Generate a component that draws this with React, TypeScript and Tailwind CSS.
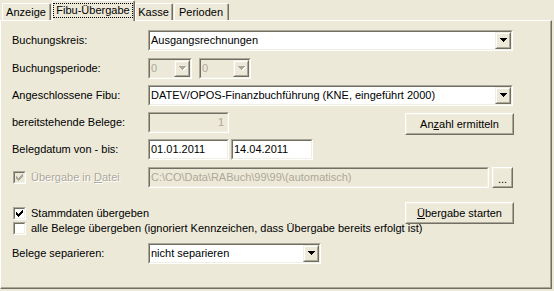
import React from "react";

const sunkenOuter = "border border-t-[#ACA899] border-l-[#ACA899] border-r-white border-b-white";
const sunkenInner = "border border-t-[#716F64] border-l-[#716F64] border-r-[#F1EFE2] border-b-[#F1EFE2]";
const grayText = "text-[#ACA899]";

function Arrow({ disabled }: { disabled?: boolean }) {
  const rows = [
    [0, 7],
    [1, 5],
    [2, 3],
    [3, 1],
  ];
  return (
    <svg width="8" height="5" shapeRendering="crispEdges">
      {disabled &&
        rows.map(([x, w], i) => <rect key={"s" + i} x={x + 1} y={i + 1} width={w} height={1} fill="#fff" />)}
      {rows.map(([x, w], i) => (
        <rect key={i} x={x} y={i} width={w} height={1} fill={disabled ? "#ACA899" : "#000"} />
      ))}
    </svg>
  );
}

function CheckMark({ color }: { color: string }) {
  const rects = [
    [6, 0, 1],
    [5, 1, 2],
    [0, 2, 1],
    [4, 2, 3],
    [0, 3, 2],
    [3, 3, 3],
    [0, 4, 5],
    [1, 5, 3],
    [2, 6, 1],
  ];
  return (
    <svg width="7" height="7" shapeRendering="crispEdges">
      {rects.map(([x, y, w], i) => (
        <rect key={i} x={x} y={y} width={w} height={1} fill={color} />
      ))}
    </svg>
  );
}

function CheckBox({ checked, disabled }: { checked?: boolean; disabled?: boolean }) {
  return (
    <div className={`w-[13px] h-[13px] shrink-0 ${sunkenOuter}`}>
      <div
        className={`w-full h-full flex items-center justify-center ${sunkenInner} ${
          disabled ? "bg-[#ECE9D8]" : "bg-white"
        }`}
      >
        {checked && <CheckMark color={disabled ? "#ACA899" : "#000"} />}
      </div>
    </div>
  );
}

function DropButton({ disabled }: { disabled?: boolean }) {
  return (
    <div className="w-[16px] h-full shrink-0 border border-t-[#F1EFE2] border-l-[#F1EFE2] border-r-[#716F64] border-b-[#716F64] bg-[#ECE9D8]">
      <div className="w-full h-full flex items-center justify-center pl-[1px] border border-t-white border-l-white border-r-[#ACA899] border-b-[#ACA899]">
        <Arrow disabled={disabled} />
      </div>
    </div>
  );
}

function Combo({ value, width, disabled }: { value: string; width: string; disabled?: boolean }) {
  return (
    <div className={`h-[21px] shrink-0 ${width} ${sunkenOuter}`}>
      <div className={`h-full flex ${sunkenInner} ${disabled ? "bg-[#ECE9D8]" : "bg-white"}`}>
        <span className={`flex-1 pl-[1px] leading-[17px] whitespace-nowrap overflow-hidden ${disabled ? grayText : ""}`}>
          {value}
        </span>
        <DropButton disabled={disabled} />
      </div>
    </div>
  );
}

function Edit({
  value,
  width,
  disabled,
  right,
}: {
  value: string;
  width: string;
  disabled?: boolean;
  right?: boolean;
}) {
  return (
    <div className={`h-[21px] shrink-0 ${width} ${sunkenOuter}`}>
      <div
        className={`h-full px-[1px] leading-[17px] whitespace-nowrap overflow-hidden ${sunkenInner} ${
          disabled ? `bg-[#ECE9D8] ${grayText}` : "bg-white"
        } ${right ? "text-right pr-[3px]" : ""}`}
      >
        {value}
      </div>
    </div>
  );
}

function Button({ children, className }: { children: React.ReactNode; className: string }) {
  return (
    <div
      className={`shrink-0 bg-[#ECE9D8] border border-t-white border-l-white border-r-[#716F64] border-b-[#716F64] ${className}`}
    >
      <div className="h-full flex items-center justify-center border border-t-[#F1EFE2] border-l-[#F1EFE2] border-r-[#ACA899] border-b-[#ACA899]">
        {children}
      </div>
    </div>
  );
}

function Tab({ label, width, selected }: { label: string; width: string; selected?: boolean }) {
  if (selected) {
    return (
      <div
        className={`relative z-10 h-[21px] bg-[#ECE9D8] rounded-t-[2px] border-t border-l border-r border-t-white border-l-white border-r-[#716F64] ${width}`}
      >
        <div className="h-full flex justify-center pt-[2px] border-r border-r-[#ACA899]">
          <span className="h-[15px] leading-[13px] px-[2px] border border-dotted border-black">{label}</span>
        </div>
      </div>
    );
  }
  return (
    <div
      className={`h-[18px] rounded-t-[2px] border-t border-l border-r border-t-white border-l-white border-r-[#716F64] ${width}`}
    >
      <div className="h-full flex justify-center pt-[2px] leading-[13px] border-r border-r-[#ACA899]">{label}</div>
    </div>
  );
}

function Label({ children }: { children: React.ReactNode }) {
  return <div className="w-[136px] shrink-0 whitespace-nowrap">{children}</div>;
}

export default function App() {
  return (
    <div className="w-[554px] h-[291px] bg-[#ECE9D8] text-[11px] text-black font-['Liberation_Sans',Arial,sans-serif] overflow-hidden">
      <div className="flex items-end h-[21px] pl-[2px]">
        <Tab label="Anzeige" width="w-[49px]" />
        <div className="ml-[1px]">
          <Tab label="Fibu-Übergabe" width="w-[83px]" selected />
        </div>
        <Tab label="Kasse" width="w-[38px]" />
        <div className="ml-[1px]">
          <Tab label="Perioden" width="w-[55px]" />
        </div>
      </div>

      <div className="relative -mt-px w-[552px] h-[269px] border-t border-l border-r border-b border-t-white border-l-white border-r-[#716F64] border-b-[#716F64]">
        <div className="h-full border-r border-b border-r-[#ACA899] border-b-[#ACA899] pl-[11px] pr-[36px] pt-[9px] flex flex-col">
          <div className="flex items-center h-[21px]">
            <Label>Buchungskreis:</Label>
            <Combo value="Ausgangsrechnungen" width="w-[365px]" />
          </div>

          <div className="flex items-center h-[21px] mt-[7px]">
            <Label>Buchungsperiode:</Label>
            <Combo value="0" width="w-[44px]" disabled />
            <div className="ml-[7px]">
              <Combo value="0" width="w-[52px]" disabled />
            </div>
          </div>

          <div className="flex items-center h-[21px] mt-[6px]">
            <Label>Angeschlossene Fibu:</Label>
            <Combo value="DATEV/OPOS-Finanzbuchführung (KNE, eingeführt 2000)" width="w-[365px]" />
          </div>

          <div className="flex items-start h-[21px] mt-[6px]">
            <div className="w-[136px] shrink-0 leading-[21px]">bereitstehende Belege:</div>
            <Edit value="1" width="w-[81px]" disabled right />
            <Button className="ml-auto mt-[1px] w-[109px] h-[22px]">
              <span>
                An<span className="underline">z</span>ahl ermitteln
              </span>
            </Button>
          </div>

          <div className="flex items-center h-[21px] mt-[6px]">
            <Label>Belegdatum von - bis:</Label>
            <Edit value="01.01.2011" width="w-[81px]" />
            <div className="ml-[2px]">
              <Edit value="14.04.2011" width="w-[82px]" />
            </div>
          </div>

          <div className="flex items-center h-[21px] mt-[7px]">
            <div className="w-[136px] shrink-0 flex items-center pl-[1px]">
              <CheckBox checked disabled />
              <span className={`ml-[5px] ${grayText} [text-shadow:1px_1px_0_#fff]`}>
                Übergabe in <span className="underline">D</span>atei
              </span>
            </div>
            <Edit value="C:\CO\Data\RABuch\99\99\(automatisch)" width="w-[341px]" disabled />
            <Button className="ml-[3px] w-[21px] h-[21px]">
              <span className="leading-[11px] pt-[4px]">...</span>
            </Button>
          </div>

          <div className="flex items-start mt-[14px]">
            <div className="flex flex-col pt-[4px] pl-[1px] min-w-0 whitespace-nowrap">
              <div className="flex items-center h-[15px]">
                <CheckBox checked />
                <span className="ml-[5px]">Stammdaten übergeben</span>
              </div>
              <div className="flex items-center h-[15px]">
                <CheckBox />
                <span className="ml-[5px]">
                  alle Belege übergeben (ignoriert Kennzeichen, dass Übergabe bereits erfolgt ist)
                </span>
              </div>
            </div>
            <Button className="ml-auto w-[109px] h-[22px]">
              <span>
                <span className="underline">Ü</span>bergabe starten
              </span>
            </Button>
          </div>

          <div className="flex items-center h-[21px] mt-[7px]">
            <Label>Belege separieren:</Label>
            <Combo value="nicht separieren" width="w-[173px]" />
          </div>
        </div>
      </div>
    </div>
  );
}
